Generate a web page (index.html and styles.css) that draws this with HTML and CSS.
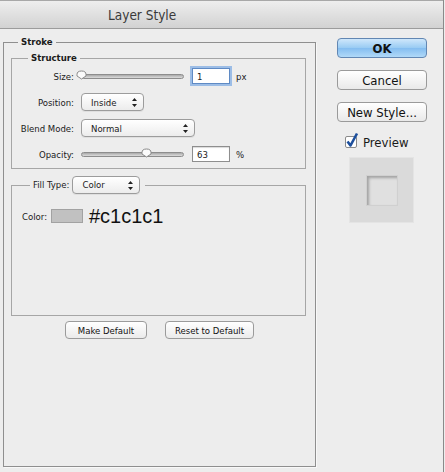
FILE: index.html
```html
<!DOCTYPE html>
<html lang="en">
<head>
    <meta charset="UTF-8">
    <title>Layer Style</title>
    <link rel="stylesheet" href="styles.css">
</head>
<body>
    <div class="window">
        <div class="titlebar">Layer Style</div>
        <div class="dialog">
            <fieldset class="group outer">
                <legend>Stroke</legend>

                <fieldset class="group structure">
                    <legend>Structure</legend>
                    <div class="row">
                        <label class="row-label">Size:</label>
                        <div class="slider">
                            <div class="track"></div>
                            <svg class="thumb" style="left: 0%" width="11" height="10" viewBox="0 0 11 10"><path d="M1 4.5 Q1 1 5.5 1 Q10 1 10 4.5 L10 6 L5.5 9 L1 6 Z" fill="#fbfbfb" stroke="#8a8a8a"/></svg>
                        </div>
                        <div class="field focused">1</div>
                        <span class="unit">px</span>
                    </div>
                    <div class="row">
                        <label class="row-label">Position:</label>
                        <div class="select position">
                            <span>Inside</span>
                            <svg class="arrows" width="5" height="9" viewBox="0 0 5 9"><path d="M2.5 0 L5 3 L0 3 Z M2.5 9 L5 6 L0 6 Z" fill="#222"/></svg>
                        </div>
                    </div>
                    <div class="row">
                        <label class="row-label">Blend Mode:</label>
                        <div class="select blend">
                            <span>Normal</span>
                            <svg class="arrows" width="5" height="9" viewBox="0 0 5 9"><path d="M2.5 0 L5 3 L0 3 Z M2.5 9 L5 6 L0 6 Z" fill="#222"/></svg>
                        </div>
                    </div>
                    <div class="row">
                        <label class="row-label">Opacity:</label>
                        <div class="slider">
                            <div class="track"></div>
                            <svg class="thumb" style="left: 63%" width="11" height="10" viewBox="0 0 11 10"><path d="M1 4.5 Q1 1 5.5 1 Q10 1 10 4.5 L10 6 L5.5 9 L1 6 Z" fill="#fbfbfb" stroke="#8a8a8a"/></svg>
                        </div>
                        <div class="field">63</div>
                        <span class="unit">%</span>
                    </div>
                </fieldset>

                <fieldset class="group fill">
                    <legend>
                        <span class="fill-label">Fill Type:</span>
                        <div class="select filltype">
                            <span>Color</span>
                            <svg class="arrows" width="5" height="9" viewBox="0 0 5 9"><path d="M2.5 0 L5 3 L0 3 Z M2.5 9 L5 6 L0 6 Z" fill="#222"/></svg>
                        </div>
                    </legend>
                    <div class="color-row">
                        <span class="color-label">Color:</span>
                        <div class="swatch"></div>
                        <span class="hex">#c1c1c1</span>
                    </div>
                </fieldset>

                <div class="defaults">
                    <button class="small-btn make">Make Default</button>
                    <button class="small-btn reset">Reset to Default</button>
                </div>
            </fieldset>

            <div class="side">
                <button class="btn primary">OK</button>
                <button class="btn">Cancel</button>
                <button class="btn">New Style...</button>
                <div class="preview-check">
                    <svg width="15" height="17" viewBox="0 0 15 17">
                        <rect x="0.5" y="4.5" width="11" height="11" rx="1.5" fill="#fff" stroke="#8a8a8a"/>
                        <path d="M2.5 9.5 L5.5 13.5 L12 1.5" fill="none" stroke="#1d4f9c" stroke-width="2.6" stroke-linejoin="round"/>
                    </svg>
                    <span>Preview</span>
                </div>
                <div class="preview-box">
                    <div class="preview-inner"></div>
                </div>
            </div>
        </div>
    </div>
</body>
</html>
```

FILE: styles.css
```css
* {
    box-sizing: border-box;
}
body {
    margin: 0;
    background-color: #ededed;
    font-family: "DejaVu Sans Condensed", "DejaVu Sans", sans-serif;
    font-size: 9.5px;
    color: #1a1a1a;
}
.window {
    width: 444px;
    height: 472px;
    border-right: 1px solid #8a8a8a;
    background-color: #ededed;
}
.titlebar {
    height: 29px;
    padding-left: 108px;
    line-height: 28px;
    font-size: 13.5px;
    color: #3a3a3a;
    border-top: 1px solid #a8a8a8;
    border-bottom: 1px solid #9c9c9c;
    background: linear-gradient(#eeeeee, #d2d2d2);
}
.dialog {
    display: flex;
    padding-left: 3px;
}

/* grouped boxes */
.group {
    margin: 0;
    padding: 0;
    border: 1px solid #a6a6a6;
}
.group legend {
    line-height: 14px;
    font-weight: bold;
    padding: 0 3px;
}
.outer {
    margin-top: 6px;
    width: 313px;
    height: 432px;
    border-color: #8f8f8f;
    box-shadow: 1px 1px 0 #f8f8f8;
}
.outer > legend {
    margin-left: 14px;
}
.structure {
    margin: 2px 0 0 7px;
    width: 295px;
    padding: 2px 0 5px 0;
}
.structure > legend {
    margin-left: 16px;
}
.row {
    display: flex;
    align-items: center;
    height: 18px;
    margin-bottom: 8px;
}
.row:last-child {
    margin-bottom: 0;
}
.row-label {
    width: 62px;
    text-align: right;
    margin-right: 7px;
}

/* sliders */
.slider {
    position: relative;
    width: 103px;
    height: 18px;
    margin-right: 8px;
}
.track {
    position: absolute;
    left: 0;
    right: 0;
    top: 7px;
    height: 5px;
    border: 1px solid #8d8d8d;
    border-radius: 3px;
    background: linear-gradient(#a9a9a9, #dcdcdc);
}
.thumb {
    position: absolute;
    top: 3px;
    margin-left: -5px;
}
.field {
    width: 38px;
    height: 16px;
    padding: 1px 0 0 4px;
    line-height: 13px;
    background: #fff;
    border: 1px solid #8e8e8e;
    box-shadow: inset 0 1px 1px rgba(0, 0, 0, 0.15);
    margin-right: 6px;
}
.field.focused {
    border-color: #5f8ac4;
    box-shadow: 0 0 0 2px #9cbde6;
}

/* popup selects */
.select {
    display: flex;
    align-items: center;
    justify-content: space-between;
    height: 18px;
    padding: 0 6px 0 9px;
    border: 1px solid #9c9c9c;
    border-radius: 4px;
    background: linear-gradient(#ffffff, #ececec);
    box-shadow: 0 1px 0 rgba(0, 0, 0, 0.06);
}
.position {
    width: 63px;
}
.blend {
    width: 114px;
}

/* fill type */
.fill {
    margin: 7px 0 0 7px;
    width: 295px;
    height: 140px;
    padding: 10px 0 0 10px;
}
.fill > legend {
    display: flex;
    align-items: center;
    margin-left: 8px;
    padding: 0 5px 0 3px;
    font-weight: normal;
    line-height: 18px;
}
.fill-label {
    margin-right: 3px;
}
.filltype {
    width: 68px;
}
.color-row {
    display: flex;
    align-items: center;
    height: 24px;
}
.color-label {
    width: 29px;
}
.swatch {
    width: 32px;
    height: 14px;
    background-color: #c1c1c1;
    border: 1px solid #a2a2a2;
    margin-right: 6px;
}
.hex {
    font-family: "Liberation Sans", Arial, sans-serif;
    font-size: 20px;
    color: #111;
}

/* bottom buttons */
.defaults {
    display: flex;
    justify-content: center;
    gap: 18px;
    margin-top: 5px;
}
.small-btn {
    height: 18px;
    padding: 0;
    font-family: inherit;
    font-size: 9.5px;
    color: #111;
    border: 1px solid #9b9b9b;
    border-radius: 4px;
    background: linear-gradient(#ffffff, #ebebeb);
}
.make {
    width: 82px;
}
.reset {
    width: 89px;
}

/* right column */
.side {
    display: flex;
    flex-direction: column;
    margin-left: 21px;
    padding-top: 9px;
    width: 90px;
}
.btn {
    height: 20px;
    margin-bottom: 12px;
    padding: 0;
    font-family: inherit;
    font-size: 13px;
    color: #111;
    border: 1px solid #9a9a9a;
    border-radius: 4px;
    background: linear-gradient(#ffffff, #e9e9e9);
}
.btn.primary {
    font-weight: bold;
    border-color: #6287b3;
    background: linear-gradient(#cfe7fb, #98cbf3 50%, #84bdf0 51%, #b0d9f8);
}
.preview-check {
    display: flex;
    align-items: center;
    height: 18px;
    padding-left: 8px;
    margin-top: -1px;
    font-size: 13px;
}
.preview-check svg {
    margin-right: 3px;
    margin-top: -4px;
}
.preview-box {
    display: flex;
    align-items: center;
    justify-content: center;
    width: 65px;
    height: 66px;
    margin: 6px 0 0 12px;
    background-color: #dadada;
    border: 1px solid #e4e4e4;
}
.preview-inner {
    width: 32px;
    height: 31px;
    background-color: #e0e0e0;
    border: 1px solid #d0d0d0;
    box-shadow: inset 2px 2px 3px rgba(0, 0, 0, 0.28);
}
```
